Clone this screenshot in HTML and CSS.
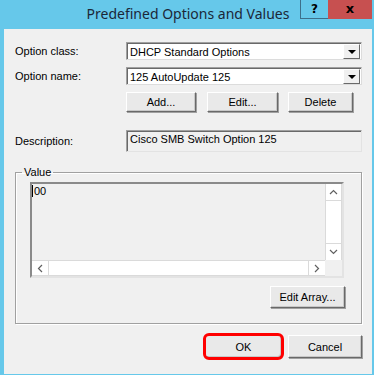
FILE: index.html
```html
<!DOCTYPE html>
<html>
<head>
  <meta charset="utf-8">
  <title>Predefined Options and Values</title>
  <link rel="stylesheet" href="styles.css">
</head>
<body>
  <div class="window">
    <div class="titlebar">
      <span></span>
      <div class="title">Predefined Options and Values</div>
      <div class="caption-buttons">
        <span class="cap-btn help">?</span>
        <span class="cap-btn close">x</span>
      </div>
    </div>

    <div class="client">
      <div class="row">
        <label class="field-label">Option class:</label>
        <div class="combo">
          <span class="combo-text">DHCP Standard Options</span>
          <span class="combo-arrow"><span class="tri"></span></span>
        </div>
      </div>

      <div class="row">
        <label class="field-label">Option name:</label>
        <div class="combo">
          <span class="combo-text">125 AutoUpdate 125</span>
          <span class="combo-arrow"><span class="tri"></span></span>
        </div>
      </div>

      <div class="button-row">
        <button class="btn btn-add">Add...</button>
        <button class="btn btn-edit">Edit...</button>
        <button class="btn btn-delete">Delete</button>
      </div>

      <div class="desc-row">
        <label class="field-label">Description:</label>
        <div class="desc-box">Cisco SMB Switch Option 125</div>
      </div>

      <fieldset class="value-group">
        <legend>Value</legend>
        <div class="value-box">
          <div class="value-text"><span class="caret"></span>00</div>
          <div class="vscroll">
            <span class="sb-btn">
              <svg width="9" height="6" viewBox="0 0 9 6"><polyline points="1,5 4.5,1.5 8,5" fill="none" stroke="#606060" stroke-width="1.2"/></svg>
            </span>
            <span class="sb-track"></span>
            <span class="sb-btn">
              <svg width="9" height="6" viewBox="0 0 9 6"><polyline points="1,1 4.5,4.5 8,1" fill="none" stroke="#606060" stroke-width="1.2"/></svg>
            </span>
          </div>
          <div class="hscroll">
            <span class="sb-btn">
              <svg width="6" height="9" viewBox="0 0 6 9"><polyline points="5,1 1.5,4.5 5,8" fill="none" stroke="#606060" stroke-width="1.2"/></svg>
            </span>
            <span class="sb-track"></span>
            <span class="sb-btn">
              <svg width="6" height="9" viewBox="0 0 6 9"><polyline points="1,1 4.5,4.5 1,8" fill="none" stroke="#606060" stroke-width="1.2"/></svg>
            </span>
          </div>
          <div class="sb-corner"></div>
        </div>
        <div class="array-row">
          <button class="btn btn-array">Edit Array...</button>
        </div>
      </fieldset>

      <div class="footer">
        <button class="btn btn-ok">OK</button>
        <button class="btn btn-cancel">Cancel</button>
      </div>
    </div>
  </div>
</body>
</html>
```

FILE: styles.css
```css
body {
  margin: 0;
  font-family: "Liberation Sans", Arial, sans-serif;
  font-size: 11px;
  color: #000;
}

.window {
  width: 374px;
  height: 375px;
  box-sizing: border-box;
  padding: 0 2px 1px 4px;
  background: #66c8ea;
  display: flex;
  flex-direction: column;
}

/* title bar */

.titlebar {
  height: 29px;
  flex: none;
  display: grid;
  grid-template-columns: 1fr auto 1fr;
}

.title {
  font-family: "Noto Sans", "Open Sans", sans-serif;
  font-size: 14px;
  line-height: 20px;
  padding-top: 4px;
  color: #1b2738;
  white-space: nowrap;
}

.caption-buttons {
  justify-self: end;
  align-self: start;
  display: flex;
}

.cap-btn {
  height: 19px;
  box-sizing: border-box;
  display: flex;
  align-items: center;
  justify-content: center;
  font-family: "DejaVu Sans", sans-serif;
  font-weight: bold;
  font-size: 12px;
  color: #000;
}

.help {
  width: 28px;
  border: 1px solid #3d6f8a;
  border-top: none;
  border-right: none;
}

.close {
  width: 44px;
  background: #c75050;
  font-size: 13px;
  padding-bottom: 3px;
}

/* client area */

.client {
  flex: 1;
  background: #f0f0f0;
  padding: 13px 10px 0 11px;
  display: flex;
  flex-direction: column;
}

.row {
  display: flex;
  align-items: center;
  height: 18px;
  margin-bottom: 7px;
}

.field-label {
  width: 111px;
  flex: none;
}

.combo {
  width: 236px;
  height: 18px;
  box-sizing: border-box;
  background: #fff;
  border: 1px solid #a0a0a0;
  border-right-color: #dcdcdc;
  border-bottom-color: #dcdcdc;
  box-shadow: inset 1px 1px 0 #696969;
  display: flex;
  align-items: center;
}

.combo-text {
  flex: 1;
  padding-left: 3px;
  padding-top: 1px;
}

.combo-arrow {
  width: 17px;
  height: 15px;
  margin-right: 1px;
  margin-top: 1px;
  box-sizing: border-box;
  background: #f0f0f0;
  border: 1px solid #fff;
  border-right-color: #696969;
  border-bottom-color: #696969;
  display: flex;
  align-items: center;
  justify-content: center;
}

.tri {
  width: 0;
  height: 0;
  border-left: 4px solid transparent;
  border-right: 4px solid transparent;
  border-top: 4px solid #000;
}

/* buttons */

.btn {
  font-family: "Liberation Sans", Arial, sans-serif;
  font-size: 11px;
  color: #000;
  margin: 0;
  padding: 0;
  box-sizing: border-box;
  background: #e9e9e9;
  border: 1px solid #fff;
  border-right-color: #696969;
  border-bottom-color: #696969;
  box-shadow: 1px 1px 0 #a0a0a0, inset -1px -1px 0 #c8c8c8;
}

.button-row {
  display: flex;
  padding-left: 111px;
  margin-bottom: 18px;
}

.button-row .btn {
  height: 20px;
}

.btn-add {
  width: 70px;
  margin-right: 11px;
}

.btn-edit {
  width: 71px;
  margin-right: 10px;
}

.btn-delete {
  width: 65px;
}

/* description */

.desc-row {
  display: flex;
  align-items: center;
  height: 22px;
  margin-bottom: 14px;
}

.desc-box {
  width: 237px;
  height: 22px;
  box-sizing: border-box;
  align-self: flex-start;
  border: 1px solid #a0a0a0;
  border-right-color: #e3e3e3;
  border-bottom-color: #e3e3e3;
  box-shadow: inset 1px 1px 0 #696969;
  padding: 2px 0 0 3px;
}

/* value group */

.value-group {
  margin: 0;
  padding: 3px 16px 15px 14px;
  border: 1px solid #a0a0a0;
  box-shadow: 1px 1px 0 #fff, inset 1px 1px 0 #fff;
}

.value-group legend {
  margin-left: -8px;
  padding: 0 2px;
  line-height: 13px;
}

.value-box {
  width: 314px;
  height: 96px;
  box-sizing: border-box;
  border: 2px solid #8a8a8a;
  border-right-color: #e3e3e3;
  border-bottom-color: #e3e3e3;
  display: grid;
  grid-template-columns: 1fr 17px;
  grid-template-rows: 1fr 16px;
  background: #f0f0f0;
}

.value-text {
  padding: 1px 0 0 0;
  display: flex;
  align-items: flex-start;
}

.caret {
  width: 1px;
  height: 12px;
  background: #000;
  margin-right: 1px;
}

.vscroll {
  display: flex;
  flex-direction: column;
  background: #fff;
  border-left: 1px solid #dadada;
  border-right: 1px solid #dadada;
}

.hscroll {
  display: flex;
  background: #fff;
  border-top: 1px solid #dadada;
  border-bottom: 1px solid #dadada;
}

.sb-btn {
  flex: none;
  display: flex;
  align-items: center;
  justify-content: center;
  background: #fff;
}

.vscroll .sb-btn {
  height: 16px;
}

.vscroll .sb-btn:first-child {
  border-bottom: 1px solid #dadada;
}

.vscroll .sb-btn:last-child {
  border-top: 1px solid #dadada;
}

.hscroll .sb-btn {
  width: 16px;
}

.hscroll .sb-btn:first-child {
  border-right: 1px solid #dadada;
}

.hscroll .sb-btn:last-child {
  border-left: 1px solid #dadada;
}

.sb-track {
  flex: 1;
}

.sb-corner {
  background: #f0f0f0;
}

.array-row {
  display: flex;
  justify-content: flex-end;
  margin-top: 8px;
}

.btn-array {
  width: 75px;
  height: 22px;
}

/* footer */

.footer {
  display: flex;
  justify-content: flex-end;
  margin-top: 11px;
}

.footer .btn {
  height: 23px;
}

.btn-ok {
  width: 77px;
  margin-right: 6px;
  border-radius: 4px;
  outline: 3px solid #f00;
  outline-offset: -1px;
}

.btn-cancel {
  width: 74px;
}
```
